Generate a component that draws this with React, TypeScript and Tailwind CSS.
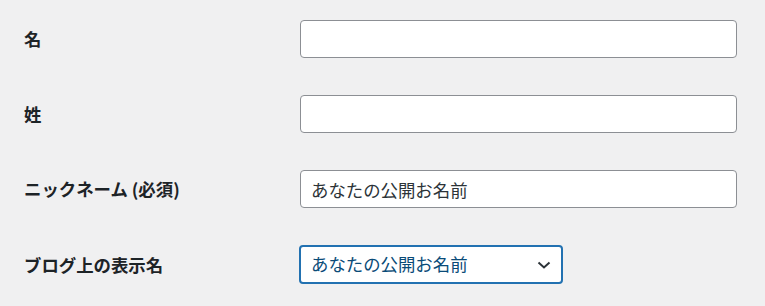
import React from "react";

const font = { fontFamily: '"Noto Sans CJK JP", "Noto Sans", sans-serif' };

export default function App() {
  return (
    <div
      className="w-[765px] h-[306px] bg-[#f0f0f1] pt-[20px] pl-[24px] text-[#1d2327]"
      style={font}
    >
      <div className="grid grid-cols-[276px_437px] gap-y-[37px] items-center">
        <label className="font-bold text-[17.4px] leading-none">名</label>
        <input
          className="h-[38px] w-[437px] bg-white border border-[#8c8f94] rounded-[4px] px-[10px] text-[17.4px] text-[#2c3338] outline-none"
          defaultValue=""
        />
        <label className="font-bold text-[17.4px] leading-none">姓</label>
        <input
          className="h-[38px] w-[437px] bg-white border border-[#8c8f94] rounded-[4px] px-[10px] text-[17.4px] text-[#2c3338] outline-none"
          defaultValue=""
        />
        <label className="font-bold text-[17.4px] leading-none">ニックネーム (必須)</label>
        <input
          className="h-[38px] w-[437px] bg-white border border-[#8c8f94] rounded-[4px] px-[10px] text-[17.4px] text-[#2c3338] outline-none"
          defaultValue="あなたの公開お名前"
        />
        <label className="font-bold text-[17.4px] leading-none">ブログ上の表示名</label>
        <div className="h-[39px] w-[264px] -ml-[1px] bg-white border-2 border-[#2271b1] rounded-[4px] flex items-center justify-between pl-[10px] pr-[10px]">
          <span className="text-[17.4px] text-[#0a4b78]">あなたの公開お名前</span>
          <svg width="14" height="8" viewBox="0 0 14 8" className="mt-[1px]">
            <polyline
              points="1.5,1.5 7,6.5 12.5,1.5"
              fill="none"
              stroke="#2c3338"
              strokeWidth="2"
            />
          </svg>
        </div>
      </div>
    </div>
  );
}
